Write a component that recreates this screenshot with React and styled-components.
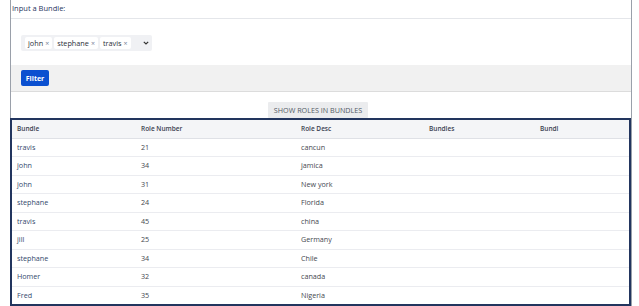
import styled, { createGlobalStyle } from "styled-components";

const GlobalStyle = createGlobalStyle`
    body{
        margin: 0;
        background: #fff;
        font-family: "Segoe UI", "Open Sans", "Noto Sans", sans-serif;
        font-size: 7px;
        color: #172b4d;
    }
`;

const StyledPanel = styled.div`
    margin-left: 10px;
    width: 622px;
    height: 306px;
    box-sizing: border-box;
    border-left: 1px solid #9aa0aa;
    border-right: 1px solid #9aa0aa;
`;

const StyledLabelRow = styled.div`
    height: 19px;
    box-sizing: border-box;
    border-bottom: 1px solid #e4e6ea;
    padding: 3px 0 0 1px;
    font-size: 7.5px;
    color: #1f3560;
`;

const StyledSelectArea = styled.div`
    height: 46px;
    box-sizing: border-box;
    padding: 16px 10px 0;
`;

const StyledSelect = styled.div`
    display: flex;
    align-items: center;
    gap: 2px;
    width: 131px;
    height: 16px;
    box-sizing: border-box;
    padding: 0 3px 0 4px;
    background: #f0f1f4;
    border-radius: 2px;
`;

const StyledChip = styled.span`
    display: inline-flex;
    align-items: center;
    gap: 2px;
    height: 12px;
    padding: 0 3px;
    background: #fff;
    border-radius: 2px;
    color: #2a2f38;
    font-size: 7.3px;

    b{
        font-weight: normal;
        color: #7a8599;
        font-size: 7px;
    }
`;

const StyledChevron = styled.svg`
    margin-left: auto;
`;

const StyledFilterBar = styled.div`
    height: 27px;
    box-sizing: border-box;
    padding: 5px 10px 0;
    background: #f1f1f1;
    border-bottom: 1px solid #dcdcdc;
`;

const StyledFilterBtn = styled.button`
    width: 28px;
    height: 16px;
    padding: 0;
    border: none;
    border-radius: 2px;
    background: #0b50d0;
    color: #fff;
    font-family: inherit;
    font-weight: bold;
    font-size: 7px;
`;

const StyledCtrl = styled.div`
    display: flex;
    justify-content: center;
    height: 26px;
    box-sizing: border-box;
    padding: 10px 6px 0 0;
`;

const StyledShowBtn = styled.button`
    width: 100px;
    height: 16px;
    padding: 0;
    border: none;
    border-radius: 1px;
    background: #ebecee;
    color: #545b66;
    font-family: inherit;
    font-size: 7.2px;
    text-transform: uppercase;
`;

const StyledTable = styled.table`
    margin-left: -1px;
    width: 621px;
    box-sizing: border-box;
    border: 2px solid #22355e;
    border-collapse: collapse;
    table-layout: fixed;
`;

const StyledHead = styled.th`
    height: 17.5px;
    padding: 0 0 0 5px;
    background: #f4f5f7;
    border-bottom: 1px solid #dfe1e6;
    text-align: left;
    font-weight: 600;
    color: #3a4150;
    font-size: 6.5px;
`;

const StyledCell = styled.td`
    height: 17.5px;
    padding: 0 0 0 5px;
    border-bottom: 1px solid #ebecf0;
    font-size: 7.2px;
    line-height: 1;
    color: ${({ $first }) => ($first ? "#34496e" : "#45484f")};
`;

const columns = [
    { name: "Bundle", width: 125 },
    { name: "Role Number", width: 160 },
    { name: "Role Desc", width: 128 },
    { name: "Bundles", width: 111 },
    { name: "Bundl" },
];

const rows = [
    ["travis", "21", "cancun"],
    ["john", "34", "jamica"],
    ["john", "31", "New york"],
    ["stephane", "24", "Florida"],
    ["travis", "45", "china"],
    ["jill", "25", "Germany"],
    ["stephane", "34", "Chile"],
    ["Homer", "32", "canada"],
    ["Fred", "35", "Nigeria"],
];

export default function App(){
    return(
        <>
            <GlobalStyle />
            <StyledPanel>
                <StyledLabelRow>Input a Bundle:</StyledLabelRow>
                <StyledSelectArea>
                    <StyledSelect>
                        {["john", "stephane", "travis"].map((name) => (
                            <StyledChip key={name}>{name}<b>×</b></StyledChip>
                        ))}
                        <StyledChevron width="6" height="4" viewBox="0 0 6 4">
                            <path d="M0.8 0.8 L3 3 L5.2 0.8" fill="none" stroke="#333" strokeWidth="1.2" />
                        </StyledChevron>
                    </StyledSelect>
                </StyledSelectArea>
                <StyledFilterBar>
                    <StyledFilterBtn>Filter</StyledFilterBtn>
                </StyledFilterBar>
                <StyledCtrl>
                    <StyledShowBtn>Show roles in bundles</StyledShowBtn>
                </StyledCtrl>
                <StyledTable>
                    <colgroup>
                        {columns.map(({ name, width }) => (
                            <col key={name} style={width ? { width } : undefined} />
                        ))}
                    </colgroup>
                    <thead>
                        <tr>
                            {columns.map(({ name }) => (
                                <StyledHead key={name}>{name}</StyledHead>
                            ))}
                        </tr>
                    </thead>
                    <tbody>
                        {rows.map(([bundle, num, desc], index) => (
                            <tr key={index}>
                                <StyledCell $first>{bundle}</StyledCell>
                                <StyledCell>{num}</StyledCell>
                                <StyledCell>{desc}</StyledCell>
                                <StyledCell />
                                <StyledCell />
                            </tr>
                        ))}
                    </tbody>
                </StyledTable>
            </StyledPanel>
        </>
    )
}
